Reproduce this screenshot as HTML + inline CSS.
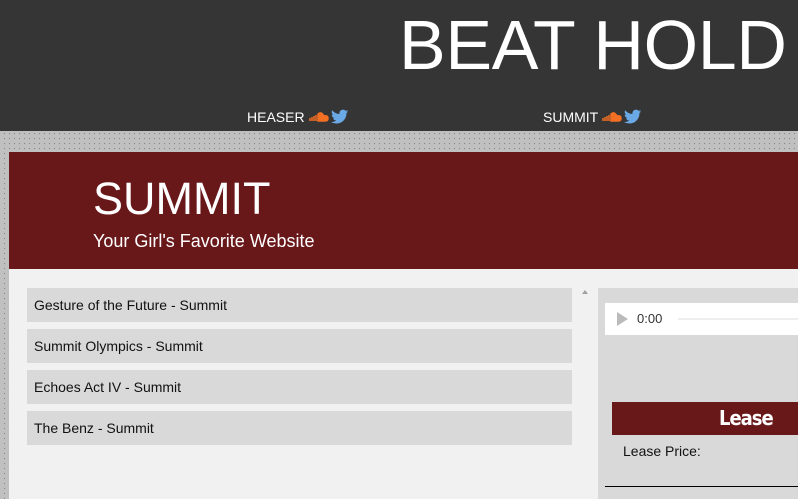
<!DOCTYPE html>
<html><head><meta charset="utf-8"><style>
body{margin:0;width:798px;height:499px;overflow:hidden;font-family:"Liberation Sans",Arial,sans-serif;background:#c0c0c0;position:relative}
.hdr{position:absolute;left:0;top:0;width:798px;height:131px;background:#353535}
.title{position:absolute;left:399px;top:5px;font-size:70px;color:#fff;white-space:nowrap;letter-spacing:-0.3px}
.nav{position:absolute;top:109px;color:#fff;font-size:14px;display:flex;align-items:center}
.dots{position:absolute;left:0;top:131px;width:798px;height:368px;background-color:#c0c0c0;background-image:radial-gradient(circle,#888 0.7px,transparent 0.8px);background-size:5px 5px;background-position:7px 0px}
.banner{position:absolute;left:9px;top:152px;width:789px;height:117px;background:#69181a;color:#fff}
.banner h1{position:absolute;left:84px;top:21px;margin:0;font-weight:normal;font-size:45px}
.banner p{position:absolute;left:84px;top:79px;margin:0;font-size:18px}
.content{position:absolute;left:9px;top:269px;width:789px;height:230px;background:#f1f1f1}
.item{position:absolute;left:27px;width:545px;height:34px;background:#d9d9d9;font-size:14px;color:#111;line-height:34px;text-indent:7px}
.panel{position:absolute;left:598px;top:288px;width:200px;height:211px;background:#d9d9d9}
</style></head><body>
<div class="hdr"></div>
<div class="title">BEAT HOLD</div>
<div class="nav" style="left:247px">HEASER
<svg width="20" height="10" viewBox="0 0 20 10" style="margin-left:4px"><path d="M1 9 L1 6 M3 9 L3 5 M5 9 L5 4 M7 9V3 M9 9V2 Q12 -1 15 4 Q19 3 19 6.5 Q19 9 16 9Z" stroke="#f26f23" stroke-width="1.5" fill="#f26f23"/></svg>
<svg width="18" height="16" viewBox="0 0 24 20" style="margin-left:2px"><path d="M23 2.5a9 9 0 0 1-2.7.8A4.7 4.7 0 0 0 22.4.6a9.4 9.4 0 0 1-3 1.1A4.7 4.7 0 0 0 11.4 6 13.3 13.3 0 0 1 1.6 1a4.7 4.7 0 0 0 1.5 6.3A4.7 4.7 0 0 1 1 6.7v.1a4.7 4.7 0 0 0 3.8 4.6 4.7 4.7 0 0 1-2.1.1 4.7 4.7 0 0 0 4.4 3.2A9.4 9.4 0 0 1 0 16.6 13.3 13.3 0 0 0 7.2 18.7c8.6 0 13.4-7.2 13.4-13.4v-.6A9.5 9.5 0 0 0 23 2.5z" fill="#6aa9e6"/></svg></div>
<div class="nav" style="left:543px">SUMMIT
<svg width="20" height="10" viewBox="0 0 20 10" style="margin-left:4px"><path d="M1 9 L1 6 M3 9 L3 5 M5 9 L5 4 M7 9V3 M9 9V2 Q12 -1 15 4 Q19 3 19 6.5 Q19 9 16 9Z" stroke="#f26f23" stroke-width="1.5" fill="#f26f23"/></svg>
<svg width="18" height="16" viewBox="0 0 24 20" style="margin-left:2px"><path d="M23 2.5a9 9 0 0 1-2.7.8A4.7 4.7 0 0 0 22.4.6a9.4 9.4 0 0 1-3 1.1A4.7 4.7 0 0 0 11.4 6 13.3 13.3 0 0 1 1.6 1a4.7 4.7 0 0 0 1.5 6.3A4.7 4.7 0 0 1 1 6.7v.1a4.7 4.7 0 0 0 3.8 4.6 4.7 4.7 0 0 1-2.1.1 4.7 4.7 0 0 0 4.4 3.2A9.4 9.4 0 0 1 0 16.6 13.3 13.3 0 0 0 7.2 18.7c8.6 0 13.4-7.2 13.4-13.4v-.6A9.5 9.5 0 0 0 23 2.5z" fill="#6aa9e6"/></svg></div>
<div class="dots"></div>
<div class="banner"><h1>SUMMIT</h1><p>Your Girl's Favorite Website</p></div>
<div class="content"></div>
<div class="item" style="top:288px">Gesture of the Future - Summit</div>
<div class="item" style="top:329px">Summit Olympics - Summit</div>
<div class="item" style="top:370px">Echoes Act IV - Summit</div>
<div class="item" style="top:411px">The Benz - Summit</div>
<div style="position:absolute;left:582px;top:290px;width:0;height:0;border-left:3px solid transparent;border-right:3px solid transparent;border-bottom:4px solid #a0a0a0"></div>
<div class="panel"></div>
<div style="position:absolute;left:605px;top:303px;width:193px;height:32px;background:#fff"></div>
<div style="position:absolute;left:617px;top:312px;width:0;height:0;border-top:7px solid transparent;border-bottom:7px solid transparent;border-left:11px solid #bbb"></div>
<div style="position:absolute;left:637px;top:311px;font-size:13px;color:#333">0:00</div>
<div style="position:absolute;left:678px;top:318px;width:120px;height:2px;background:#eee"></div>
<div style="position:absolute;left:612px;top:402px;width:186px;height:33px;background:#69181a;color:#fff;font-family:'DejaVu Sans Condensed','DejaVu Sans',sans-serif;font-weight:bold;font-size:20px;line-height:33px;text-indent:107px;letter-spacing:-1px">Lease</div>
<div style="position:absolute;left:623px;top:443px;font-size:14px;color:#111">Lease Price:</div>
<div style="position:absolute;left:605px;top:486px;width:193px;height:1px;background:#000"></div>
</body></html>
